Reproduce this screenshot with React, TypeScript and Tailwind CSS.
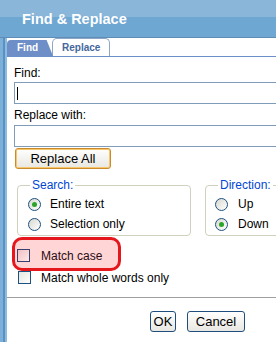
import React from 'react'

const Radio = ({ checked }: { checked?: boolean }) => (
  <span className="flex h-[13px] w-[13px] shrink-0 items-center justify-center rounded-full border border-[#1c5180] bg-linear-to-br from-[#d8d8d0] to-white">
    {checked && <span className="h-[5px] w-[5px] rounded-full bg-[#2aa52a]" />}
  </span>
)

const Check = ({ tint }: { tint?: boolean }) => (
  <span
    className={
      tint
        ? 'block h-[13px] w-[13px] shrink-0 border border-[#3a3f6e] bg-linear-to-br from-[#f0c0c4] to-[#ffe8e8]'
        : 'block h-[13px] w-[13px] shrink-0 border border-[#1c5180] bg-linear-to-br from-[#e6e6e0] to-white'
    }
  />
)

const XpButton = ({ label, width, focused }: { label: string; width: string; focused?: boolean }) => (
  <button
    className={
      (focused
        ? 'border-[#c98b2c] shadow-[inset_0_0_0_1px_#f7c56a] '
        : 'border-[#1f4e7e] ') +
      width +
      ' flex h-[21px] items-center justify-center rounded-[3px] border bg-linear-to-b from-white to-[#e8e7e1] text-[13px] leading-none text-black'
    }
  >
    {label}
  </button>
)

export default function App() {
  return (
    <div className="h-[342px] w-[276px] overflow-hidden bg-white font-['Liberation_Sans',Arial,sans-serif] text-[12px] text-black">
      {/* title bar */}
      <div className="flex h-[38px] items-center border-b border-[#5f8db5] bg-[linear-gradient(#8ab6d9_0_17px,#6fa7d3_17px)] pl-[22px] pt-[3px] text-[14.5px] font-bold text-white">
        Find &amp; Replace
      </div>

      <div className="flex h-[304px]">
        {/* left frame */}
        <div className="flex w-[7px] shrink-0">
          <span className="w-[3px] bg-[#7cb0d9]" />
          <span className="w-[2px] bg-[#5a90c2]" />
          <span className="w-[2px] bg-[#8cbbdf]" />
        </div>

        <div className="min-w-0 flex-1 overflow-hidden">
          {/* tabs */}
          <div className="flex h-[19px] items-end border-b border-[#6b8fc8]">
            <div className="h-[16px] w-[46px] rounded-tl-[4px] bg-[#6d8ec6] pl-[10px] text-[10px] font-bold leading-[16px] text-white [clip-path:polygon(0_0,86%_0,100%_100%,0_100%)]">
              Find
            </div>
            <div className="-ml-[1px] h-[18px] w-[58px] rounded-t-[5px] border border-b-0 border-[#8fa6c9] bg-white pl-[9px] text-[10px] font-bold leading-[17px] text-[#44679c]">
              Replace
            </div>
          </div>

          <div className="px-[7px]">
            <div className="mt-[9px] leading-[14px]">Find:</div>
            <div className="mt-[2px] flex h-[22px] w-[290px] items-center border border-[#7f9db9] pl-[2px]">
              <span className="h-[13px] w-[1px] bg-black" />
            </div>
            <div className="mt-[4px] leading-[14px]">Replace with:</div>
            <div className="mt-[3px] h-[22px] w-[290px] border border-[#7f9db9]" />
            <div className="ml-[1px] mt-[1px]">
              <XpButton label="Replace All" width="w-[96px]" focused />
            </div>

            {/* option groups */}
            <div className="mt-[9px] flex gap-[14px] pl-[3px]">
              <fieldset className="w-[174px] shrink-0 rounded-[4px] border border-[#d0d0bf] pb-[1px] pt-[2px]">
                <legend className="ml-[12px] px-[2px] leading-[14px] text-[#0046d5]">Search:</legend>
                <label className="flex h-[20px] items-center gap-[9px] pl-[10px]">
                  <Radio checked />
                  Entire text
                </label>
                <label className="flex h-[20px] items-center gap-[9px] pl-[10px]">
                  <Radio />
                  Selection only
                </label>
              </fieldset>
              <fieldset className="w-[90px] shrink-0 rounded-[4px] border border-[#d0d0bf] pb-[1px] pt-[2px]">
                <legend className="ml-[12px] px-[2px] leading-[14px] text-[#0046d5]">Direction:</legend>
                <label className="flex h-[20px] items-center gap-[10px] pl-[9px]">
                  <Radio />
                  Up
                </label>
                <label className="flex h-[20px] items-center gap-[10px] pl-[9px]">
                  <Radio checked />
                  Down
                </label>
              </fieldset>
            </div>

            {/* highlighted option */}
            <div className="-ml-[2px] mt-[1px] flex h-[34px] w-[109px] items-center gap-[11px] rounded-[10px] border-[3px] border-[#e5171d] bg-[#ffd5d5] pl-[2px] pt-[3px] text-[#2a0c14]">
              <Check tint />
              Match case
            </div>
            <label className="flex h-[13px] items-center gap-[10px] pl-[4px]">
              <Check />
              Match whole words only
            </label>

            <div className="-mx-[7px] mt-[13px] border-t border-[#a0a0a0]" />

            <div className="mt-[13px] flex justify-end gap-[11px] pr-[24px]">
              <XpButton label="OK" width="w-[26px]" />
              <XpButton label="Cancel" width="w-[58px]" />
            </div>
          </div>
        </div>
      </div>
    </div>
  )
}
